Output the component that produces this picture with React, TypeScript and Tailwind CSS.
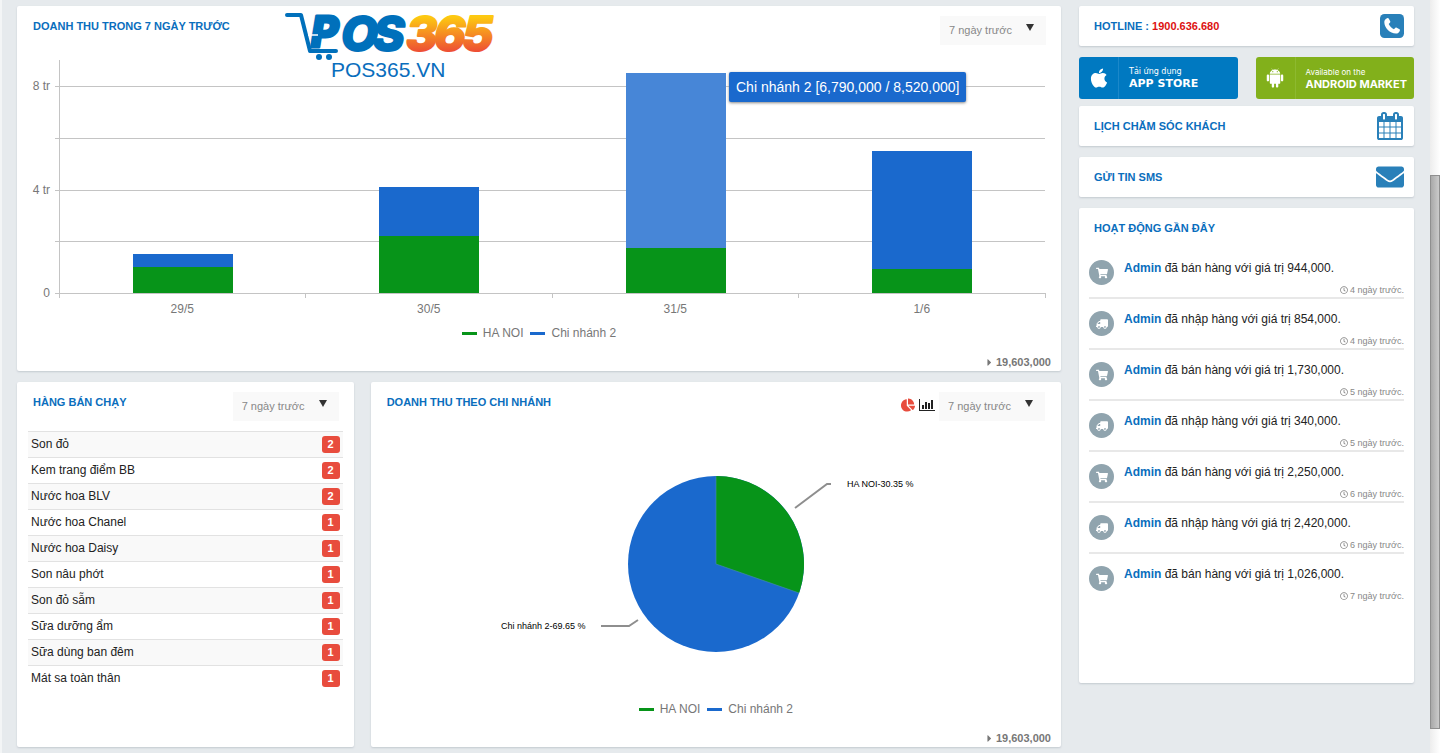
import { useId } from "react";
import type { ReactNode } from "react";
import { FaApple, FaCaretRight, FaChartPie, FaEnvelope, FaRegClock, FaShoppingCart, FaTruck } from "react-icons/fa";
import { AiFillAndroid } from "react-icons/ai";

const GREEN = "#079419";
const BLUE = "#1a69cd";

const revenue = [
    { day: "29/5", hanoi: 1, branch: 0.5 },
    { day: "30/5", hanoi: 2.2, branch: 1.9 },
    { day: "31/5", hanoi: 1.73, branch: 6.79, active: true },
    { day: "1/6", hanoi: 0.92, branch: 4.563 },
];

const products = [
    { name: "Son đỏ", count: 2 },
    { name: "Kem trang điểm BB", count: 2 },
    { name: "Nước hoa BLV", count: 2 },
    { name: "Nước hoa Chanel", count: 1 },
    { name: "Nước hoa Daisy", count: 1 },
    { name: "Son nâu phớt", count: 1 },
    { name: "Son đỏ sẫm", count: 1 },
    { name: "Sữa dưỡng ẩm", count: 1 },
    { name: "Sữa dùng ban đêm", count: 1 },
    { name: "Mát sa toàn thân", count: 1 },
];

const activities = [
    { type: "sale", value: "944,000", days: 4 },
    { type: "import", value: "854,000", days: 4 },
    { type: "sale", value: "1,730,000", days: 5 },
    { type: "import", value: "340,000", days: 5 },
    { type: "sale", value: "2,250,000", days: 6 },
    { type: "import", value: "2,420,000", days: 6 },
    { type: "sale", value: "1,026,000", days: 7 },
];

const Card = ({ children, className = "" }: { children: ReactNode; className?: string }) => (
    <section className={`rounded-xs bg-white shadow-[0_1px_2px_#c3cad0] ${className}`}>{children}</section>
);

const Title = ({ children }: { children: ReactNode }) => (
    <h2 className="text-[11px] leading-5 font-bold text-[#0a6ebd]">{children}</h2>
);

const PeriodSelect = ({ label }: { label: string }) => {
    const id = useId();
    return (
        <div className="relative">
            <label htmlFor={id} className="sr-only">{label}</label>
            <select id={id} className="h-[29px] w-[106px] appearance-none bg-[#f9f9f9] pl-[9px] text-[11px] text-[#888]">
                <option>7 ngày trước</option>
                <option>Hôm nay</option>
                <option>Tháng này</option>
            </select>
            <svg className="pointer-events-none absolute top-2 right-3 h-[7px] w-2" viewBox="0 0 8 7">
                <path d="M0 0h8L4 7z" fill="#333" />
            </svg>
        </div>
    );
};

const Legend = () => (
    <ul className="flex justify-center gap-[7px] text-xs leading-4 text-[#777]">
        <li className="flex items-center gap-[6px]">
            <span className="h-[3px] w-[15px] bg-[#079419]" />
            HA NOI
        </li>
        <li className="flex items-center gap-[6px]">
            <span className="h-[3px] w-[15px] bg-[#1a69cd]" />
            Chi nhánh 2
        </li>
    </ul>
);

const Total = () => (
    <p className="flex items-center justify-end gap-px pr-[10px] text-[11px] leading-4 font-bold text-[#777]">
        <FaCaretRight size={11} />
        19,603,000
    </p>
);

const Logo = () => (
    <svg className="overflow-visible" width="212" height="72" viewBox="0 0 212 72" aria-label="POS365">
        <defs>
            <linearGradient id="sun" x1="0" y1="6" x2="0" y2="44" gradientUnits="userSpaceOnUse">
                <stop offset="0" stopColor="#fdc911" />
                <stop offset="1" stopColor="#ec4238" />
            </linearGradient>
        </defs>
        <path d="M3 4h14l9 36h26" fill="none" stroke="#0070bb" strokeWidth="4" strokeLinecap="round" strokeLinejoin="round" />
        <circle cx="35" cy="46" r="3" fill="#0070bb" />
        <circle cx="45" cy="46" r="3" fill="#0070bb" />
        <g fontFamily="Inter" fontWeight="800" fontStyle="italic" strokeLinejoin="round">
            <text x="27" y="36" fontSize="42" fill="#0070bb" stroke="#0070bb" strokeWidth="3">P</text>
            <path d="M24 24h10" fill="none" stroke="#fff" strokeWidth="1.500" />
            <text y="40" x="57 89" fontSize="48" fill="#0070bb" stroke="#0070bb" strokeWidth="2">OS</text>
            <text y="40" x="122 150 178" fontSize="48" fill="url(#sun)" stroke="url(#sun)" strokeWidth="2">365</text>
        </g>
        <text x="47" y="66" fill="#0a6ebd" fontFamily="Liberation Sans" fontSize="21">POS365.VN</text>
    </svg>
);

// px per million on the value axis, the zero line is at y = 248
const UNIT = 25.85;
const ZERO = 248;
const gridLines = [0, 2, 4, 6, 8];

const BarChart = () => (
    <div className="relative flex pr-4">
        <svg className="h-[280px] w-[42px] shrink-0" fontSize="12" fill="#777">
            {gridLines.map((v) => (
                <g key={v}>
                    <path d={`M38 ${Math.round(ZERO - v * UNIT) + 0.5}h4`} stroke="#c4c4c4" />
                    {v % 4 === 0 && (
                        <text x="33" y={Math.round(ZERO - v * UNIT) + 4} textAnchor="end">
                            {v ? `${v} tr` : "0"}
                        </text>
                    )}
                </g>
            ))}
        </svg>
        <svg className="h-[280px] min-w-0 flex-1 overflow-visible" fontSize="12">
            {gridLines.map((v) => {
                const y = Math.round(ZERO - v * UNIT) + 0.5;
                return <line key={v} x1="0" x2="100%" y1={y} y2={y} stroke="#c4c4c4" />;
            })}
            <path d="M0.5 15v238" stroke="#c4c4c4" />
            {[25, 50, 75, 100].map((x) => (
                <line key={x} x1={`${x}%`} x2={`${x}%`} y1={ZERO} y2={ZERO + 5} stroke="#c4c4c4" shapeRendering="crispEdges" />
            ))}
            {revenue.map((r, i) => {
                const x = `${i * 25 + 7.46}%`;
                const low = r.hanoi * UNIT;
                const high = r.branch * UNIT;
                return (
                    <g key={r.day} shapeRendering="crispEdges">
                        <rect x={x} y={ZERO - low} width="10.15%" height={low} fill={GREEN} />
                        <rect x={x} y={ZERO - low - high} width="10.15%" height={high} fill={r.active ? "#4786d7" : BLUE} />
                        <text x={`${i * 25 + 12.5}%`} y="268" textAnchor="middle" fill="#777">{r.day}</text>
                    </g>
                );
            })}
        </svg>
        <div className="absolute top-[27px] left-[68.2%] rounded-xs bg-[#1a69cd] px-[7px] py-[5px] text-sm leading-5 whitespace-nowrap text-white shadow-[0_1px_3px_#888]">
            Chi nhánh 2 [6,790,000 / 8,520,000]
        </div>
    </div>
);

const PieChart = () => (
    <svg className="mx-auto" width="440" height="200" viewBox="0 0 440 200" fontSize="9">
        <circle cx="220" cy="94" r="88" fill={BLUE} />
        <path d="M220 94V6a88 88 0 0 1 83.1 117z" fill={GREEN} />
        <path d="M220 6v88l83.1 29" fill="none" stroke="#4a8fb0" strokeWidth="0.6" />
        <path d="M299 38l32-24h4M105 156h28l9-6" fill="none" stroke="#8e8e8e" strokeWidth="2" />
        <text x="351" y="17">HA NOI-30.35 %</text>
        <text x="5" y="159">Chi nhánh 2-69.65 %</text>
    </svg>
);

const BarIcon = () => (
    <svg width="16" height="12" viewBox="0 0 16 12">
        <path d="M0 0h1v11h15v1H0zM3 6h2v4H3zM6 3h2v7H6zM9 4h2v6H9zM12 1h2v9h-2z" fill="#222" />
    </svg>
);

const CalendarIcon = () => (
    <svg width="28" height="28" viewBox="64 0 1664 1792" fill="#2980b9">
        <path d="M192 1664h288v-288h-288v288zm352 0h320v-288h-320v288zm-352-352h288v-320h-288v320zm352 0h320v-320h-320v320zm-352-384h288v-288h-288v288zm736 736h320v-288h-320v288zm-384-736h320v-288h-320v288zm768 736h288v-288h-288v288zm-384-352h320v-320h-320v320zm-352-864v-288q0-13-9.5-22.5t-22.5-9.5h-64q-13 0-22.5 9.5t-9.5 22.5v288q0 13 9.5 22.5t22.5 9.5h64q13 0 22.5-9.5t9.5-22.5zm736 864h288v-320h-288v320zm-384-384h320v-288h-320v288zm384 0h288v-288h-288v288zm32-480v-288q0-13-9.5-22.5t-22.5-9.5h-64q-13 0-22.5 9.5t-9.5 22.5v288q0 13 9.5 22.5t22.5 9.5h64q13 0 22.5-9.5t9.5-22.5zm384-64v1280q0 52-38 90t-90 38h-1408q-52 0-90-38t-38-90v-1280q0-52 38-90t90-38h128v-96q0-66 47-113t113-47h64q66 0 113 47t47 113v96h384v-96q0-66 47-113t113-47h64q66 0 113 47t47 113v96h128q52 0 90 38t38 90z" />
    </svg>
);

// rounded square with a white handset on it
const PhoneIcon = () => (
    <svg width="24" height="24" viewBox="0 0 24 24">
        <rect width="24" height="24" rx="4.500" fill="#2980b9" />
        <path
            d="M7.200 4.200c.6-.3 1.200-.2 1.500.4l1.500 2.700c.3.600.2 1-.3 1.500l-1.200 1.200c1 2.200 2.900 4.200 5.200 5.300l1.300-1.300c.5-.5 1-.6 1.500-.3l2.800 1.500c.5.300.6.700.4 1.300-.5 1.900-2 3.100-4 3.100C10 19.600 4.300 13.700 4.300 8c0-1.800 1.200-3.300 2.900-3.800z"
            fill="#fff"
        />
    </svg>
);

const QuickLink = ({ icon, children }: { icon: ReactNode; children: ReactNode }) => (
    <Card>
        <a href="#" className="flex h-10 items-center justify-between pr-[10px] pl-[15px]">
            <Title>{children}</Title>
            {icon}
        </a>
    </Card>
);

const App = () => (
    <div className="flex min-h-screen items-stretch border-l-2 border-[#f3f5f6] bg-[#e6eaed] font-['Liberation_Sans',Arial,sans-serif] text-xs text-[#222]">
        <main className="grid min-w-0 flex-1 grid-cols-[minmax(0,1fr)_335px] content-start gap-x-[18px] pt-[6px] pr-4 pb-[6px] pl-[15px]">
            <div className="flex flex-col gap-[11px]">
                <Card className="relative h-[365px]">
                    <div className="flex items-start justify-between pt-[10px] pr-[15px] pl-4">
                        <Title>DOANH THU TRONG 7 NGÀY TRƯỚC</Title>
                        <PeriodSelect label="Khoảng thời gian doanh thu" />
                    </div>
                    <BarChart />
                    <Legend />
                    <div className="pt-[13px]">
                        <Total />
                    </div>
                    <div className="absolute top-[5px] left-[267px]">
                        <Logo />
                    </div>
                </Card>

                <div className="grid grid-cols-3 gap-x-[17px]">
                    <Card>
                        <div className="flex items-start justify-between pt-[10px] pr-[15px] pl-4">
                            <Title>HÀNG BÁN CHẠY</Title>
                            <PeriodSelect label="Khoảng thời gian hàng bán chạy" />
                        </div>
                        <div className="px-[11px] pt-[10px]">
                            <table className="w-full">
                                <tbody>
                                    {products.map((p) => (
                                        <tr key={p.name} className="h-[26px] border-t border-[#e2e2e2] odd:bg-[#f9f9f9]">
                                            <td className="pb-[2px] pl-[3px]">{p.name}</td>
                                            <td className="pr-[3px] text-right">
                                                <span className="inline-block w-[18px] rounded-[3px] bg-[#e84c3d] text-center text-[11px] leading-[17px] font-bold text-white">
                                                    {p.count}
                                                </span>
                                            </td>
                                        </tr>
                                    ))}
                                </tbody>
                            </table>
                        </div>
                    </Card>

                    <Card className="col-span-2 h-[365px]">
                        <div className="flex items-start pt-[10px] pr-4 pl-4">
                            <Title>DOANH THU THEO CHI NHÁNH</Title>
                            <div className="ml-auto flex h-[26px] items-center gap-1 pr-1">
                                <button type="button" aria-label="Biểu đồ tròn">
                                    <FaChartPie size={14} color="#e84c3d" />
                                </button>
                                <button type="button" aria-label="Biểu đồ cột">
                                    <BarIcon />
                                </button>
                            </div>
                            <PeriodSelect label="Khoảng thời gian theo chi nhánh" />
                        </div>
                        <div className="pt-[49px]">
                            <PieChart />
                        </div>
                        <div className="pt-[31px] pb-[13px]">
                            <Legend />
                        </div>
                        <Total />
                    </Card>
                </div>
            </div>

            <aside className="flex flex-col">
                <QuickLink icon={<PhoneIcon />}>
                    HOTLINE : <span className="text-[#dd1111]">1900.636.680</span>
                </QuickLink>
                <div className="grid grid-cols-2 gap-[18px] pt-[11px] pb-[7px] text-white">
                    <a href="#" className="flex h-[42px] items-center rounded-[3px] bg-[#0079c1] font-['DejaVu_Sans',sans-serif]">
                        <span className="flex h-full w-10 items-center justify-center border-r border-[#1b88ca]">
                            <FaApple size={22} />
                        </span>
                        <span className="pl-[10px] whitespace-nowrap">
                            <span className="block text-[8px] leading-3">Tải ứng dụng</span>
                            <span className="block text-[11px] leading-3 font-bold">APP STORE</span>
                        </span>
                    </a>
                    <a href="#" className="flex h-[42px] items-center rounded-[3px] bg-[#82b01b] font-['Inter',sans-serif]">
                        <span className="flex h-full w-10 items-center justify-center border-r border-[#8db930]">
                            <AiFillAndroid size={22} />
                        </span>
                        <span className="pl-[10px] whitespace-nowrap">
                            <span className="block text-[8px] leading-3">Available on the</span>
                            <span className="block text-[11px] leading-3 font-bold">ANDROID MARKET</span>
                        </span>
                    </a>
                </div>
                <div className="flex flex-col gap-[11px]">
                    <QuickLink icon={<CalendarIcon />}>LỊCH CHĂM SÓC KHÁCH</QuickLink>
                    <QuickLink icon={<FaEnvelope size={28} color="#2980b9" />}>GỬI TIN SMS</QuickLink>
                    <Card className="min-h-[475px] px-[10px] pt-[10px]">
                        <div className="pb-[10px] pl-[5px]">
                            <Title>HOẠT ĐỘNG GẦN ĐÂY</Title>
                        </div>
                        <ul>
                            {activities.map((a) => (
                                <li key={a.value} className="flex h-[51px] gap-[10px] border-b-2 border-[#e8e8e8] pt-3 last:border-0">
                                    <span className="flex size-[25px] shrink-0 items-center justify-center rounded-full bg-[#90a4ae] text-white">
                                        {a.type === "sale" ? <FaShoppingCart size={12} /> : <FaTruck size={12} className="-scale-x-100" />}
                                    </span>
                                    <div className="flex-1">
                                        <p className="leading-4">
                                            <a href="#" className="font-bold text-[#0a6ebd]">Admin</a>
                                            {a.type === "sale" ? " đã bán hàng" : " đã nhập hàng"} với giá trị {a.value}.
                                        </p>
                                        <p className="flex items-center justify-end gap-[2px] pt-2 text-[9px] leading-3 text-[#888]">
                                            <FaRegClock size={8} />
                                            {a.days} ngày trước.
                                        </p>
                                    </div>
                                </li>
                            ))}
                        </ul>
                    </Card>
                </div>
            </aside>
        </main>

        {/* scroll track */}
        <div className="flex w-[10px] flex-col bg-linear-to-r from-[#ededed] to-white">
            <div className="h-[175px]" />
            <div className="flex-1 border border-[#8f8f8f] bg-linear-to-r from-[#a9a9a9] to-[#cbcbcb]" />
            <div className="h-6" />
        </div>
    </div>
);

export default App;
